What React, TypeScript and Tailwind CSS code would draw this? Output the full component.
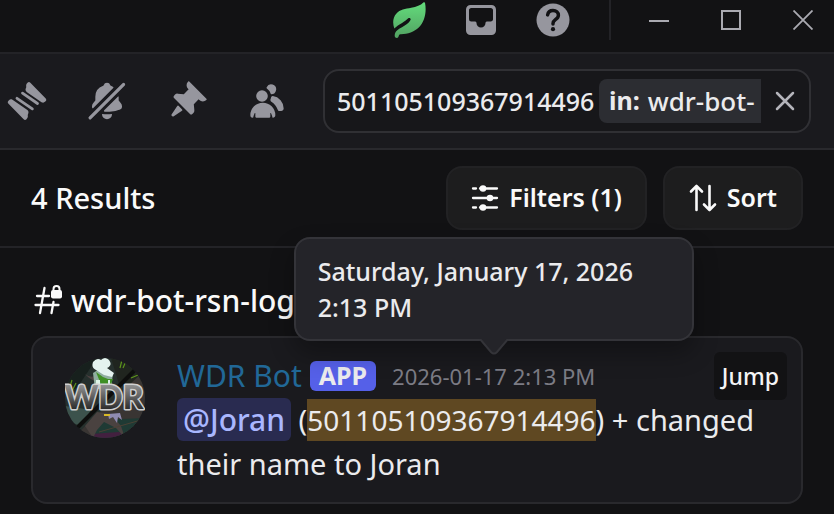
import { type ComponentProps, type FC, type ReactNode } from 'react'

type IconProps = ComponentProps<'svg'>

const Icon: FC<IconProps> = (props) => (
  <svg viewBox="0 0 24 24" fill="currentColor" aria-hidden="true" {...props}/>
)

const LeafIcon: FC<IconProps> = (props) => (
  <Icon {...props}>
    <defs>
      <linearGradient id="leaf" x1="0" y1="0" x2="0" y2="1">
        <stop offset="0" stopColor="#63dc7c"/>
        <stop offset="1" stopColor="#52a262"/>
      </linearGradient>
    </defs>
    <path
      fill="url(#leaf)"
      d="M21.6.4c.4-.5 1-.3 1.1.3C23.8 6.5 22.6 13 18.5 17c-3 2.9-7.3 4.3-11.8 4.5-.8 0-1.3.3-1.5 1l-.3.8c-.5 1-2.2.8-2.4-.4-.2-1.500.5-3 1.7-4 2-1.600 4.3-2.500 6.2-4 1.3-1 2.100-1.900 2.600-2.900.5-1-.7-1.800-1.500-1.100-1.300 1.200-2.500 2.100-4.100 3.100-2 1.200-3.700 2.100-5.200 3.700C.9 14 1.300 10.300 3.500 7.800 6 5 9.500 4.700 13.500 3.900 17 3.200 19.700 2.400 21.600.4Z"
    />
  </Icon>
)

const InboxIcon: FC<IconProps> = (props) => (
  <Icon {...props}>
    <path
      fillRule="evenodd"
      d="M5 2a3 3 0 0 0-3 3v14a3 3 0 0 0 3 3h14a3 3 0 0 0 3-3V5a3 3 0 0 0-3-3H5ZM4 5.5C4 4.67 4.67 4 5.5 4h13c.83 0 1.5.67 1.5 1.5v6c0 .83-.67 1.5-1.5 1.5h-2.65c-.5 0-.85.5-.85 1a3 3 0 1 1-6 0c0-.5-.35-1-.85-1H5.5A1.5 1.5 0 0 1 4 11.5v-6Z"
    />
  </Icon>
)

const HelpIcon: FC<IconProps> = (props) => (
  <Icon {...props}>
    <circle cx="12" cy="12" r="11"/>
    <path
      d="M8.4 8.600C8.700 6.700 10.200 5.600 12 5.600c2.100 0 3.600 1.300 3.600 3.200 0 1.600-1 2.300-2 3-.9.7-1.600 1.300-1.600 2.500v.3"
      fill="none"
      stroke="#121214"
      strokeWidth="2.300"
      strokeLinecap="round"
    />
    <circle cx="12" cy="18.100" r="1.400" fill="#121214"/>
  </Icon>
)

const ThreadsIcon: FC<IconProps> = (props) => (
  <Icon {...props}>
    <path d="M12.3 1.100c.5-.6 1.200-.6 1.700-.1l9.100 9.300c.6.6.6 1.400 0 1.900l-.3.3c-.6.6-1.400.6-2.100.2L12 6.700c-.9-.6-1.100-1.600-.7-2.300.3-.5.3-.9.2-1.300-.1-.7.2-1.500.8-2Z"/>
    <path d="M11.700 22.900c-.5.6-1.200.6-1.700.1L.9 13.700c-.6-.6-.6-1.400 0-1.900l.3-.3c.6-.6 1.400-.6 2.100-.2l8.700 6c.9.6 1.100 1.600.7 2.300-.3.5-.3.9-.2 1.300.1.7-.2 1.500-.8 2Z"/>
    <path d="m9.300 7.300 9 6.200M6 10.400l9.200 6.300" fill="none" stroke="currentColor" strokeWidth="1.700" strokeLinecap="round"/>
  </Icon>
)

const MutedBellIcon: FC<IconProps> = (props) => (
  <Icon {...props}>
    <path d="M1.3 21.3a1 1 0 1 0 1.4 1.4l20-20a1 1 0 0 0-1.4-1.4l-20 20ZM3.13 16.13c.11.27.46.28.66.08L15.73 4.27a.47.47 0 0 0-.07-.74 6.97 6.97 0 0 0-1.35-.64.62.62 0 0 1-.38-.43 2 2 0 0 0-3.86 0 .62.62 0 0 1-.38.43A7 7 0 0 0 5 9.5v2.09a.5.5 0 0 1-.13.33l-1.1 1.22A3 3 0 0 0 3 15.15v.28c0 .24.04.48.13.7ZM18.64 9.36c.13-.13.36-.05.36.14v2.09c0 .12.05.24.13.33l1.1 1.22a3 3 0 0 1 .77 2.01v.28c0 .67-.34 1.29-.95 1.56-1.31.6-4 1.51-8.05 1.51-.46 0-.9-.01-1.33-.03-.48-.02-.7-.6-.36-.93l8.33-8.18ZM9.18 19.84A.16.16 0 0 0 9 20a3 3 0 1 0 6 0c0-.1-.09-.17-.18-.16a24.84 24.84 0 0 1-5.64 0Z"/>
  </Icon>
)

const PinIcon: FC<IconProps> = (props) => (
  <Icon {...props}>
    <path d="M19.38 11.38a3 3 0 0 0 4.24 0l.03-.03a.5.5 0 0 0 0-.7L13.35.35a.5.5 0 0 0-.7 0l-.03.03a3 3 0 0 0 0 4.24L13 5l-2.92 2.92-3.65-.34a2 2 0 0 0-1.6.58l-.62.63a1 1 0 0 0 0 1.42l9.58 9.58a1 1 0 0 0 1.42 0l.63-.63a2 2 0 0 0 .58-1.6l-.34-3.64L19 11l.38.38ZM9.07 17.07a.5.5 0 0 1-.08.77l-5.15 3.43a.5.5 0 0 1-.63-.06l-.42-.42a.5.5 0 0 1-.06-.63L6.16 15a.5.5 0 0 1 .77-.08l2.14 2.14Z"/>
  </Icon>
)

const MembersIcon: FC<IconProps> = (props) => (
  <Icon {...props}>
    <path d="M14.5 8a3 3 0 1 0-2.7-4.3c-.2.4.06.86.44 1.12a5 5 0 0 1 2.14 3.08c.01.06.06.1.12.1ZM18.44 17.27c.15.43.54.73 1 .73h1.06c.83 0 1.5-.67 1.5-1.5a7.5 7.5 0 0 0-6.5-7.43c-.55-.08-.99.38-1.1.92-.06.3-.15.6-.26.87-.23.58-.05 1.3.47 1.63a9.53 9.53 0 0 1 3.83 4.78ZM12.5 9a3.5 3.5 0 1 1-7 0 3.5 3.5 0 0 1 7 0ZM2 20.5a7.5 7.5 0 0 1 15 0c0 .83-.67 1.5-1.5 1.5a.2.2 0 0 1-.2-.16c-.2-.96-.56-1.87-.88-2.54-.1-.23-.42-.15-.42.1v2.1a.5.5 0 0 1-.5.5h-8a.5.5 0 0 1-.5-.5v-2.1c0-.25-.31-.33-.42-.1-.32.67-.67 1.58-.88 2.54a.2.2 0 0 1-.2.16A1.5 1.5 0 0 1 2 20.5Z"/>
  </Icon>
)

const FiltersIcon: FC<IconProps> = (props) => (
  <Icon viewBox="0 0 28 28" {...props}>
    <path d="M2 4.500h3M9 4.500h17M2 14h15M21 14h5M2 23.500h3M9 23.500h17" stroke="currentColor" strokeWidth="2.300" strokeLinecap="round"/>
    <circle cx="12" cy="4.500" r="3.300"/>
    <circle cx="19" cy="14" r="3.300"/>
    <circle cx="12" cy="23.500" r="3.300"/>
  </Icon>
)

const SortIcon: FC<IconProps> = (props) => (
  <Icon viewBox="0 0 28 28" fill="none" stroke="currentColor" strokeWidth="2.600" strokeLinecap="round" strokeLinejoin="round" {...props}>
    <path d="M7.500 26V2M2 7.500 7.500 2 13 7.500M20.500 2v24M15 20.500l5.500 5.500 5.500-5.500"/>
  </Icon>
)

const LockedChannelIcon: FC<IconProps> = (props) => (
  <Icon viewBox="-3 -1 32 32" {...props}>
    <path d="M10.500 3 6 28M19.500 17l-2 11M3 11h12M1.500 20h23" stroke="currentColor" strokeWidth="2.300" strokeLinecap="round"/>
    <rect x="17" y="5" width="11" height="8.500" rx="2"/>
    <path d="M19.500 6V4a3 3 0 0 1 6 0v2" fill="none" stroke="currentColor" strokeWidth="2"/>
  </Icon>
)

const BotAvatar: FC<IconProps> = (props) => (
  <svg viewBox="0 0 80 80" role="img" aria-label="WDR Bot" {...props}>
    <defs>
      <clipPath id="avatar-clip"><circle cx="40" cy="40" r="40"/></clipPath>
      <linearGradient id="avatar-letters" x1="0" y1="0" x2="0" y2="1">
        <stop offset="0.2" stopColor="#929292"/>
        <stop offset="0.8" stopColor="#303030"/>
      </linearGradient>
    </defs>
    <g clipPath="url(#avatar-clip)">
      <path fill="#26302d" d="M0 0h80v80H0z"/>
      <path fill="#17201d" d="M0 0h32L12 30 0 34z"/>
      <path fill="#3c524c" d="m0 48 26 4-10 16L0 62z"/>
      <path fill="#20251f" d="M46 0h34v26L54 26z"/>
      <path fill="#393533" d="m80 12-68 64 20 4h48z"/>
      <path fill="#1f3a34" d="m34 62 46-2v20H24z"/>
      <path fill="#42203f" d="m26 76 28-2 10 6H24z"/>
      <path stroke="#0d0e0d" strokeWidth="4" d="M76 6 10 72"/>
      <path fill="#4a4240" d="m20 68 12-14 14 2 10 12 4 12-9-10-12-6-7 8-4 8z"/>
      <path stroke="#5c931c" strokeWidth="1.200" d="m55 10 2-8M58 10l3-7M4 32l3-10M7 33l4-8M66 20l7-3"/>
      <path fill="#4c4141" d="M20 16q8 6 12-1l4 7q-7 4-16-6Z"/>
      <path fill="#8fae9f" d="m28 15 8-5 12 5-2 16H30z"/>
      <path fill="#e4f3ef" d="M28 4q4-5 8-2 4-4 8 0 4 5-2 8l7 5-2 4-8-2-8-5q-5-2-3-8Z"/>
      <path fill="#3f8f24" d="m31 14 7 5 5 2h5l-3 8h-8z"/>
      <path fill="#ddf4e8" d="M31 22h4v6h-4zM43 22h2v6h-2z"/>
      <path fill="#8f8ab0" d="m43 56 12-1 2 7-4-3-1 6-4-6-4 2z"/>
      <path fill="#d8b928" d="M39 56h6v2h-6z"/>
      <path stroke="#4c4134" d="m34 74 42-12"/>
    </g>
    <text
      x="39"
      y="51"
      textAnchor="middle"
      fontFamily="Lato, sans-serif"
      fontWeight="900"
      fontSize="32"
      fill="url(#avatar-letters)"
      stroke="#d0d0d0"
      strokeWidth="3"
      strokeLinejoin="round"
      paintOrder="stroke"
    >
      WDR
    </text>
  </svg>
)

const ToolbarButton: FC<{ readonly label: string; readonly children: ReactNode }> = (props) => (
  <button type="button" aria-label={props.label} className="shrink-0 hover:text-white">
    {props.children}
  </button>
)

const TitleBar: FC = () => (
  <header className="flex justify-end border-b-2 border-[#232327] pr-[21px] pb-3 text-[#96969e]">
    <div className="flex items-center gap-9 pr-[38px]">
      <ToolbarButton label="Getting started"><LeafIcon className="size-9"/></ToolbarButton>
      <ToolbarButton label="Inbox"><InboxIcon className="size-9"/></ToolbarButton>
      <ToolbarButton label="Help"><HelpIcon className="size-9"/></ToolbarButton>
    </div>
    <div className="flex h-10 items-center gap-13 border-l-2 border-[#232327] pl-[38px] text-[#aaaab1]">
      <ToolbarButton label="Minimize">
        <svg viewBox="0 0 20 20" className="size-5"><path d="M0 11h20" stroke="currentColor" strokeWidth="2"/></svg>
      </ToolbarButton>
      <ToolbarButton label="Maximize">
        <svg viewBox="0 0 20 20" className="size-5"><path d="M1 1h18v18H1z" fill="none" stroke="currentColor" strokeWidth="2"/></svg>
      </ToolbarButton>
      <ToolbarButton label="Close">
        <svg viewBox="0 0 20 20" className="size-5"><path d="m.5.5 19 19m0-19-19 19" stroke="currentColor" strokeWidth="1.800"/></svg>
      </ToolbarButton>
    </div>
  </header>
)

const Toolbar: FC = () => (
  <div className="flex items-center gap-9 border-b-2 border-[#29292d] bg-[#1a1a1e] py-[15px] pr-[23px] pl-[7px] text-[#96969e]">
    <div className="flex gap-10">
      <ToolbarButton label="Threads"><ThreadsIcon className="size-10"/></ToolbarButton>
      <ToolbarButton label="Notification settings"><MutedBellIcon className="size-10"/></ToolbarButton>
      <ToolbarButton label="Pinned messages"><PinIcon className="size-10"/></ToolbarButton>
      <ToolbarButton label="Member list"><MembersIcon className="size-10"/></ToolbarButton>
    </div>
    <div role="search" className="flex h-16 min-w-0 flex-1 items-center rounded-2xl border-2 border-[#303034] bg-[#17171a] pl-3">
      <div className="flex min-w-0 flex-1 items-center gap-1 overflow-hidden text-[25px] font-medium text-[#ebebed]">
        <input
          aria-label="Search"
          defaultValue="501105109367914496"
          className="h-11 w-[258px] shrink-0 bg-transparent outline-none"
        />
        <span className="flex h-11 flex-1 items-center gap-2 rounded-l-lg bg-[#2c2d32] pl-2.5 text-[26px] whitespace-nowrap">
          <b className="text-[25px] font-bold">in:</b>
          wdr-bot-
        </span>
      </div>
      <button type="button" aria-label="Clear search" className="flex w-12 shrink-0 justify-center text-[#b5b5bb]">
        <svg viewBox="0 0 20 20" className="size-5">
          <path d="m2 2 16 16m0-16L2 18" stroke="currentColor" strokeWidth="2.500" strokeLinecap="round"/>
        </svg>
      </button>
    </div>
  </div>
)

const ResultsHeader: FC = () => (
  <div className="flex items-center gap-4 border-b-2 border-[#232327] px-[31px] py-4">
    <h1 className="mr-auto text-[29px] leading-11 font-medium">4 Results</h1>
    <button type="button" className="flex h-16 items-center gap-2.5 rounded-2xl border-2 border-[#222224] bg-[#1d1d1e] px-[23px] text-[25px] font-semibold">
      <FiltersIcon className="size-7"/>
      Filters (1)
    </button>
    <button type="button" className="flex h-16 items-center gap-2.5 rounded-2xl border-2 border-[#222224] bg-[#1d1d1e] px-6 text-[25px] font-semibold">
      <SortIcon className="size-7"/>
      Sort
    </button>
  </div>
)

const Timestamp: FC = () => (
  <span className="relative ml-4 text-[#7c7c85]">
    <time dateTime="2026-01-17T14:13" className="text-[22px]">2026-01-17 2:13 PM</time>
    <span
      role="tooltip"
      className="absolute bottom-13 left-1/2 z-10 w-[400px] -translate-x-1/2 rounded-2xl border-2 border-[#343439] bg-[#242429] px-[22px] py-[14px] text-[25px] leading-9 font-medium text-[#ebebed] shadow-[0_12px_24px_rgba(0,0,0,0.3)]"
    >
      Saturday, January 17, 2026 2:13 PM
      <svg viewBox="0 0 30 16" className="absolute top-full left-1/2 h-4 w-[30px] -translate-x-1/2">
        <path d="M1 0 12 13q3 3 6 0L29 0" fill="#242429" stroke="#343439" strokeWidth="2"/>
      </svg>
    </span>
  </span>
)

const SearchResult: FC = () => (
  <article className="relative flex gap-8 rounded-2xl border-2 border-[#29292d] bg-[#1a1a1e] px-8 py-4">
    <BotAvatar className="mt-1 size-20 shrink-0"/>
    <div>
      <div className="flex h-11 items-center">
        <span className="text-[30px] leading-11 text-[#216897]">WDR Bot</span>
        <span className="ml-2 flex h-[30px] items-center rounded-md bg-[#5560e8] px-[9px] text-[25px] font-bold text-[#ebebed]">APP</span>
        <Timestamp/>
      </div>
      <p className="text-[29px] leading-11 text-[#ebebed]">
        <span className="rounded-md bg-[#292b50] px-1.5 py-px text-[30px] font-medium text-[#a9b7ff]">@Joran</span>
        {' ('}
        <mark className="bg-[#5f4822] py-0.5 text-[28px] text-[#ebebed]">501105109367914496</mark>
        ) + changed their name to Joran
      </p>
    </div>
    <button type="button" className="absolute top-[14px] right-[14px] h-12 rounded-md bg-[#121214] px-2 text-[23px] font-medium text-[#f4f4f5]">
      Jump
    </button>
  </article>
)

const App: FC = () => (
  <div className="min-h-screen bg-[#121214] font-['Noto_Sans',sans-serif] text-[#fafafa]">
    <TitleBar/>
    <Toolbar/>
    <ResultsHeader/>
    <main className="px-[31px] pt-[30px]">
      <h2 className="flex h-11 items-center gap-2 text-[30px] font-medium">
        <LockedChannelIcon className="size-8"/>
        wdr-bot-rsn-log
      </h2>
      <div className="mt-[14px]">
        <SearchResult/>
      </div>
    </main>
  </div>
)

export default App
